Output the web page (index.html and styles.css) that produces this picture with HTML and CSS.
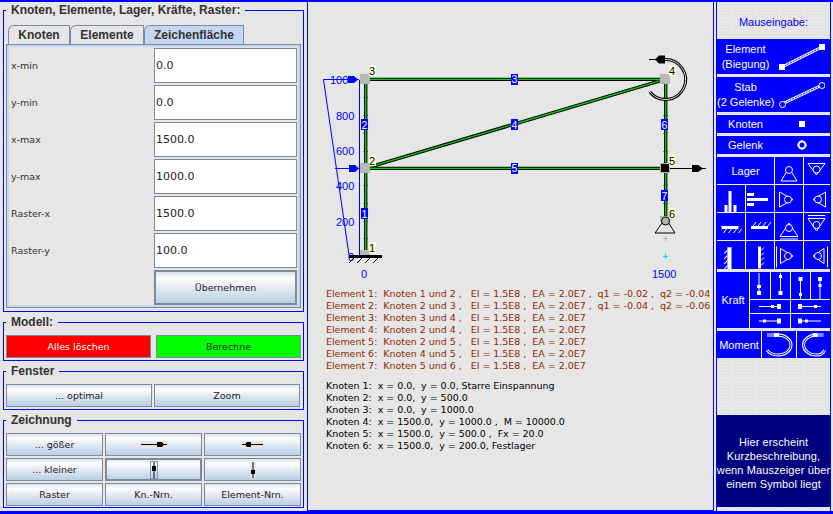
FILE: index.html
```html
<!DOCTYPE html>
<html lang="de">
<head>
<meta charset="utf-8">
<title>Stabwerk</title>
<link rel="stylesheet" href="styles.css">
</head>
<body>
<div class="app">
  <div class="left">
    <fieldset class="group g-data">
      <legend>Knoten, Elemente, Lager, Kräfte, Raster:</legend>
      <div class="tabs">
        <span class="tab t1">Knoten</span><span class="tab t2">Elemente</span><span class="tab t3 active">Zeichenfläche</span>
      </div>
      <div class="tabpane">
        <div class="frow"><label>x-min</label><input class="field" value="0.0"></div>
        <div class="frow"><label>y-min</label><input class="field" value="0.0"></div>
        <div class="frow"><label>x-max</label><input class="field" value="1500.0"></div>
        <div class="frow"><label>y-max</label><input class="field" value="1000.0"></div>
        <div class="frow"><label>Raster-x</label><input class="field" value="1500.0"></div>
        <div class="frow"><label>Raster-y</label><input class="field" value="100.0"></div>
        <div class="frow"><label></label><button class="btn apply">Übernehmen</button></div>
      </div>
    </fieldset>
    <fieldset class="group g-modell">
      <legend>Modell:</legend>
      <div class="two wide-gap">
        <button class="btn red">Alles löschen</button>
        <button class="btn green">Berechne</button>
      </div>
    </fieldset>
    <fieldset class="group g-fenster">
      <legend>Fenster</legend>
      <div class="two">
        <button class="btn">... optimal</button>
        <button class="btn">Zoom</button>
      </div>
    </fieldset>
    <fieldset class="group g-zeich">
      <legend>Zeichnung</legend>
      <div class="three">
        <button class="btn">... gößer</button>
        <button class="btn"><svg class="mini" viewBox="0 0 26 7"><rect width="26" height="7" fill="#e6e6e6"/><path d="M0 3.500H26" stroke="#000"/><path d="M16 1h5l2 2.500-2 2.500h-5z"/></svg></button>
        <button class="btn"><svg class="mini-s" viewBox="0 0 21 7"><rect width="21" height="7" fill="#e6e6e6"/><path d="M0 3.500H21" stroke="#000"/><path d="M9 1H5L3 3.500 5 6h4z"/></svg></button>
        <button class="btn">... kleiner</button>
        <button class="btn focus"><svg class="mini-v boxed" viewBox="0 0 6 16"><path d="M3 0V16" stroke="#000"/><path d="M1 4h4v5H1z"/></svg></button>
        <button class="btn"><svg class="mini-v" viewBox="0 0 6 16"><rect width="6" height="16" fill="#e6e6e6"/><path d="M3 0V16" stroke="#000"/><path d="M1 8h4v4H1z"/></svg></button>
        <button class="btn">Raster</button>
        <button class="btn">Kn.-Nrn.</button>
        <button class="btn">Element-Nrn.</button>
      </div>
    </fieldset>
  </div>

  <div class="center">
    <svg class="canvas" viewBox="308 2 405 285">
      <g fill="none" stroke="#0000ff">
        <path d="M359.500 80V255"/>
        <path d="M359 79.500H323.500L349 255"/>
        <path d="M335 168.500H359"/>
      </g>
      <path d="M348 76h6l4 3.500-4 3.500h-6z" fill="#0000ff"/>
      <path d="M349 165h6l4 3.500-4 3.500h-6z" fill="#0000ff"/>
      <g class="axis">
        <text x="330" y="84">100</text>
        <text x="336" y="120">800</text>
        <text x="336" y="155">600</text>
        <text x="336" y="190">400</text>
        <text x="336" y="226">200</text>
        <text x="348" y="261">0</text>
        <text x="361" y="278">0</text>
        <text x="652" y="278">1500</text>
      </g>
      <path class="ticks" d="M363 97.500h5M363 115.500h5M363 133.500h5M363 151.500h5M363 185.500h5M363 203.500h5M363 221.500h5M363 238.500h5M663 185.500h5M663 203.500h5M663 97.500h5M663 115.500h5M663 133.500h5M663 151.500h5"/>
      <g class="beam-o">
        <path d="M365.700 255V79"/><path d="M365 79.400H665"/><path d="M365 168.400H665"/><path d="M365 168.400L665 79.400"/><path d="M665.700 79V221"/>
      </g>
      <g class="beam-i">
        <path d="M365.700 255V79"/><path d="M365 79.400H665"/><path d="M365 168.400H665"/><path d="M365 168.400L665 79.400"/><path d="M665.700 79V221"/>
      </g>
      <rect class="node" x="360" y="74" width="10" height="10"/>
      <rect class="node" x="360" y="163" width="10" height="10"/>
      <rect class="node" x="360" y="250" width="10" height="6"/>
      <rect class="node" x="660" y="74" width="10" height="10"/>
      <rect x="660.500" y="163.500" width="9" height="9" fill="#000" stroke="#b4b4b4"/>
      <rect class="node" x="660" y="216" width="10" height="6"/>
      <rect x="349" y="255" width="33" height="3"/>
      <path d="M349 263l5-5M357 263l5-5M365 263l5-5M373 263l5-5" stroke="#000" fill="none"/>
      <path d="M665.500 218L675 233H655Z" fill="none" stroke="#000"/>
      <circle cx="665.500" cy="221" r="4" fill="#b4b4b4" stroke="#000"/>
      <path d="M663 238.500h5M665.500 236v5" stroke="#b4b4b4"/>
      <path d="M663 256.500h5M665.500 254v5" stroke="#00e0e0"/>
      <path class="arc-o" d="M650 92A20 20 0 1 0 665 59.500"/>
      <path class="arc-i" d="M650 92A20 20 0 1 0 665 59.500"/>
      <path d="M649 59.500H665" stroke="#000"/>
      <path d="M665 55.500h-6l-4 4 4 4h6z"/>
      <path d="M670 168.500H706" stroke="#000"/>
      <path d="M692 165h6l5 3.500-5 3.500h-6z"/>
      <g class="nbg">
        <rect x="369" y="65" width="7" height="11"/><rect x="369" y="155" width="7" height="11"/><rect x="369" y="242" width="7" height="11"/>
        <rect x="669" y="65" width="7" height="11"/><rect x="669" y="155" width="7" height="11"/><rect x="669" y="208" width="7" height="11"/>
      </g>
      <g class="ntext">
        <text x="369" y="75">3</text><text x="369" y="165">2</text><text x="369" y="252">1</text>
        <text x="669" y="75">4</text><text x="669" y="165">5</text><text x="669" y="218">6</text>
      </g>
      <g fill="#0000ff">
        <rect x="361" y="208" width="7" height="11"/><rect x="361" y="119" width="7" height="11"/>
        <rect x="511" y="74" width="7" height="11"/><rect x="511" y="119" width="7" height="11"/><rect x="511" y="163" width="7" height="11"/>
        <rect x="661" y="119" width="7" height="11"/><rect x="661" y="190" width="7" height="11"/>
      </g>
      <g class="etext">
        <text x="364.500" y="217.500">1</text><text x="364.500" y="128.500">2</text>
        <text x="514.500" y="83">3</text><text x="514.500" y="128.500">4</text><text x="514.500" y="172">5</text>
        <text x="664.500" y="128.500">6</text><text x="664.500" y="199.500">7</text>
      </g>
    </svg>
    <div class="lines elements">
      <div>Element 1:  Knoten 1 und 2 ,   EI = 1.5E8 ,  EA = 2.0E7 ,  q1 = -0.02 ,  q2 = -0.04</div>
      <div>Element 2:  Knoten 2 und 3 ,   EI = 1.5E8 ,  EA = 2.0E7 ,  q1 = -0.04 ,  q2 = -0.06</div>
      <div>Element 3:  Knoten 3 und 4 ,   EI = 1.5E8 ,  EA = 2.0E7</div>
      <div>Element 4:  Knoten 2 und 4 ,   EI = 1.5E8 ,  EA = 2.0E7</div>
      <div>Element 5:  Knoten 2 und 5 ,   EI = 1.5E8 ,  EA = 2.0E7</div>
      <div>Element 6:  Knoten 4 und 5 ,   EI = 1.5E8 ,  EA = 2.0E7</div>
      <div>Element 7:  Knoten 5 und 6 ,   EI = 1.5E8 ,  EA = 2.0E7</div>
    </div>
    <div class="lines knots">
      <div>Knoten 1:  x = 0.0,  y = 0.0, Starre Einspannung</div>
      <div>Knoten 2:  x = 0.0,  y = 500.0</div>
      <div>Knoten 3:  x = 0.0,  y = 1000.0</div>
      <div>Knoten 4:  x = 1500.0,  y = 1000.0 ,  M = 10000.0</div>
      <div>Knoten 5:  x = 1500.0,  y = 500.0 ,  Fx = 20.0</div>
      <div>Knoten 6:  x = 1500.0,  y = 200.0, Festlager</div>
    </div>
  </div>

  <div class="right">
    <div class="mhead">Mauseingabe:</div>
    <div class="mrow h35">
      <span class="mlabel">Element<br>(Biegung)</span>
      <svg class="line-ico" viewBox="0 0 46 26"><path d="M3 23L43 3" stroke="#fff" stroke-width="3"/><path d="M3 23L43 3" stroke="#00f" stroke-dasharray="2 1"/><rect y="20" width="6" height="6" fill="#fff"/><rect x="40" width="6" height="6" fill="#fff"/></svg>
    </div>
    <div class="mrow h35">
      <span class="mlabel">Stab<br>(2 Gelenke)</span>
      <svg class="line-ico" viewBox="0 0 46 26"><path d="M5 21L41 4" stroke="#fff" stroke-width="3"/><path d="M5 21L41 4" stroke="#00f" stroke-dasharray="2 1"/><circle cx="3.500" cy="22.500" r="3" fill="#00f" stroke="#fff"/><circle cx="43" cy="3.500" r="3" fill="#00f" stroke="#fff"/></svg>
    </div>
    <div class="mrow h18"><span class="mlabel">Knoten</span><svg class="small-ico" viewBox="0 0 6 6"><rect width="6" height="6" fill="#fff"/></svg></div>
    <div class="mrow h18"><span class="mlabel">Gelenk</span><svg class="gel-ico" viewBox="0 0 10 10"><circle cx="5" cy="5" r="3.500" fill="none" stroke="#fff" stroke-width="2"/><path d="M5 0v2M5 8v2M0 5h2M8 5h2" stroke="#fff"/></svg></div>

    <div class="lager">
      <div class="cell lab span2">Lager</div>
      <div class="cell"><svg class="i" viewBox="0 0 28 27"><path d="M14 11L22 24H6Z" class="w"/><circle cx="14" cy="13" r="3.500" class="wb"/></svg></div>
      <div class="cell"><svg class="i" viewBox="0 0 26 27"><path d="M4 6.500H21L12.500 18Z" class="w"/><circle cx="12.500" cy="12.500" r="3.500" class="wb"/></svg></div>

      <div class="cell first"><svg class="i" viewBox="0 0 27 27"><path d="M7 20h3v7H7zM11 6h3v21h-3zM16 20h3v7h-3z" fill="#fff"/></svg></div>
      <div class="cell"><svg class="i" viewBox="0 0 28 27"><path d="M1 8h7v3H1zM1 13h21v3H1zM1 18h7v3H1z" fill="#fff"/></svg></div>
      <div class="cell"><svg class="i" viewBox="0 0 28 27"><path d="M4.500 7L18 14.500 4.500 22Z" class="w"/><circle cx="13" cy="14.500" r="3.500" class="wb"/></svg></div>
      <div class="cell"><svg class="i" viewBox="0 0 26 27"><path d="M21.500 7L9 14.500 21.500 22Z" class="w"/><circle cx="14" cy="14.500" r="3.500" class="wb"/></svg></div>

      <div class="cell first"><svg class="i" viewBox="0 0 27 27"><rect x="4" y="13" width="17" height="3" fill="#fff"/><path d="M6 20l3-4M11 20l3-4M16 20l3-4M21 20l3-4" class="w"/></svg></div>
      <div class="cell"><svg class="i" viewBox="0 0 28 27"><rect x="5" y="13" width="17" height="3" fill="#fff"/><path d="M7 13l3-4M12 13l3-4M17 13l3-4M22 13l3-4" class="w"/></svg></div>
      <div class="cell"><svg class="i" viewBox="0 0 28 27"><path d="M14 10L23 23.500H5Z" class="w"/><circle cx="14" cy="15" r="3.500" class="wb"/><path d="M5 26H23" class="w"/></svg></div>
      <div class="cell"><svg class="i" viewBox="0 0 26 27"><path d="M4 5.500H21L12.500 18Z" class="w"/><circle cx="12.500" cy="12" r="3.500" class="wb"/><path d="M4 2.500H21" class="w"/></svg></div>

      <div class="cell first last"><svg class="i" viewBox="0 0 27 27"><rect x="10" y="6" width="4" height="21" fill="#fff"/><path d="M10 9l-3 3M10 14l-3 3M10 19l-3 3M10 24l-3 3" class="w"/></svg></div>
      <div class="cell last"><svg class="i" viewBox="0 0 28 27"><rect x="12" y="5" width="3" height="22" fill="#fff"/><path d="M15 9l3-3M15 14l3-3M15 19l3-3M15 24l3-3" class="w"/></svg></div>
      <div class="cell last"><svg class="i" viewBox="0 0 28 27"><path d="M5.500 7L18 14.500 5.500 22Z" class="w"/><circle cx="13" cy="14.500" r="3.500" class="wb"/><path d="M1.500 5V26" class="w"/></svg></div>
      <div class="cell last"><svg class="i" viewBox="0 0 26 27"><path d="M20 7L9 14.500 20 22Z" class="w"/><circle cx="14" cy="14.500" r="3.500" class="wb"/><path d="M23.500 5V26" class="w"/></svg></div>
    </div>

    <div class="kraft">
      <div class="klabel">Kraft</div>
      <div class="kicons">
        <div class="kfour">
          <div class="cell"><svg class="i" viewBox="0 0 20 27"><path d="M9 1V23" class="w"/><rect x="7" y="13" width="4" height="3" fill="#fff"/><rect x="7" y="19" width="4" height="4" fill="#fff"/></svg></div>
          <div class="cell"><svg class="i" viewBox="0 0 19 27"><path d="M9.500 1V23" class="w"/><rect x="8" y="3" width="3" height="3" fill="#fff"/><rect x="7.500" y="19" width="4" height="4" fill="#fff"/></svg></div>
          <div class="cell"><svg class="i" viewBox="0 0 19 27"><path d="M9.500 5V27" class="w"/><rect x="7.500" y="5" width="4" height="4" fill="#fff"/><rect x="8" y="21" width="3" height="3" fill="#fff"/></svg></div>
          <div class="cell"><svg class="i" viewBox="0 0 19 27"><path d="M9 5V27" class="w"/><rect x="7" y="5" width="4" height="4" fill="#fff"/><rect x="7.500" y="12" width="3" height="3" fill="#fff"/></svg></div>
        </div>
        <div class="ktwo">
          <div class="cell"><svg class="h" viewBox="0 0 40 13"><path d="M9 6.500H31" class="w"/><rect x="21" y="5" width="3" height="3" fill="#fff"/><rect x="27" y="4" width="4" height="5" fill="#fff"/></svg></div>
          <div class="cell"><svg class="h" viewBox="0 0 39 13"><path d="M7 6.500H30" class="w"/><rect x="7" y="4" width="4" height="5" fill="#fff"/><rect x="23" y="5" width="3" height="3" fill="#fff"/></svg></div>
          <div class="cell"><svg class="h" viewBox="0 0 40 13"><path d="M9 6.500H31" class="w"/><rect x="13" y="5" width="3" height="3" fill="#fff"/><rect x="27" y="4" width="4" height="5" fill="#fff"/></svg></div>
          <div class="cell"><svg class="h" viewBox="0 0 39 13"><path d="M7 6.500H30" class="w"/><rect x="7" y="4" width="4" height="5" fill="#fff"/><rect x="14" y="5" width="3" height="3" fill="#fff"/></svg></div>
        </div>
      </div>
    </div>

    <div class="moment">
      <div class="klabel">Moment</div>
      <div class="cell"><svg class="i" viewBox="0 0 34 27"><path d="M5 4H16A13 10 0 0 1 16 24C11 24 7 22 5 19" class="ma"/><path d="M5 4H16A13 10 0 0 1 16 24C11 24 7 22 5 19" class="mb"/><rect x="12" y="2" width="5" height="4" fill="#fff"/></svg></div>
      <div class="cell"><svg class="i" viewBox="0 0 32 27"><path d="M26 4H19A13 10 0 0 0 19 24C24 24 26 22 27 19" class="ma"/><path d="M26 4H19A13 10 0 0 0 19 24C24 24 26 22 27 19" class="mb"/><rect x="15" y="2" width="5" height="4" fill="#fff"/></svg></div>
    </div>

    <div class="spacer"></div>
    <div class="hint">Hier erscheint<br>Kurzbeschreibung,<br>wenn Mauszeiger über<br>einem Symbol liegt</div>
  </div>
</div>
</body>
</html>
```

FILE: styles.css
```css
* { box-sizing: border-box; }
html, body { margin: 0; padding: 0; background: #e6e6e6; }
body { width: 833px; height: 514px; overflow: hidden; }
body, button, input { font-family: "DejaVu Sans", sans-serif; font-size: 9.5px; color: #222; }

.app {
  width: 833px; height: 514px;
  display: flex; gap: 3px;
  padding: 0 2px 0 3px;
  border-top: 2px solid #0000ff;
  border-bottom: 3px solid #0000ff;
}
.left { width: 301px; padding-top: 1px; display: flex; flex-direction: column; gap: 3px; flex: none; }

.group { margin: 0; padding: 0 2px 1px; border: 1px solid #0000ff; min-width: 0; }
.group legend {
  margin-left: 0; padding: 0 5px;
  font: bold 12px/14px "Liberation Sans", sans-serif;
  color: #333;
}
.g-data { height: 309px; padding-top: 8px; }
.g-modell { padding-top: 6px; padding-bottom: 2px; }
.g-fenster { padding-top: 6px; padding-bottom: 2px; }
.g-zeich { padding-top: 6px; }

.tabs { display: flex; padding-left: 2px; height: 19px; }
.tab {
  display: flex; align-items: center; justify-content: center;
  font: bold 12px "Liberation Sans", sans-serif; color: #333;
  border: 1px solid #7a8aa8; border-bottom: 0;
  border-radius: 6px 0 0 0; background: #e6e6e6;
}
.t1 { width: 62px; }
.t2 { width: 74px; }
.t3 { width: 100px; }
.tab.active { background: #c5d7f0; }

.tabpane {
  height: 264px;
  border: 1px solid #7a8aa8;
  box-shadow: inset 0 0 0 2px #c5d7f0;
  padding: 3px 3px 2px 4px;
  display: flex; flex-direction: column; gap: 2px;
}
.frow { display: flex; height: 35px; align-items: center; }
.frow label { width: 143px; font-size: 9.5px; color: #333; }
.field {
  width: 143px; height: 35px; padding: 0 1px;
  border: 1px solid #7a8a99; background: #fff;
  font-size: 11px; color: #222; outline: 0; border-radius: 0;
}
.btn {
  height: 23px; padding: 0; margin: 0; cursor: default;
  border: 1px solid #7c8a9c; border-radius: 0;
  background: linear-gradient(#d6e2ef 0, #fff 20%, #e3eaf2 50%, #b9cfe5 100%);
  display: flex; align-items: center; justify-content: center;
  font-size: 9.5px; color: #222;
}
.apply { width: 143px; height: 35px; border: 2px solid #7c8a9c; }
.red { background: #ff0000; color: #fff; }
.green { background: #00ff00; color: #222; }
.two { display: grid; grid-template-columns: 146px 146px; gap: 2px; }
.wide-gap { grid-template-columns: 145px 145px; gap: 5px; }
.three { display: grid; grid-template-columns: repeat(3, 97px); gap: 2px; }
.focus { box-shadow: inset 0 0 0 1px #7c8a9c; }
.mini { width: 26px; height: 7px; }
.mini-s { width: 21px; height: 7px; }
.mini-v { width: 6px; height: 16px; }
.boxed { outline: 1px solid #7c9ab4; }

.center {
  width: 407px; flex: none;
  border: 1px solid #0000ff; border-top: 0;
  margin-right: -1px;
}
.canvas { display: block; width: 405px; height: 285px; }
.axis text { font: 11px "Liberation Sans", sans-serif; fill: #0000ff; }
.ticks { stroke: #00b8b8; fill: none; }
.beam-o path { stroke: #000; stroke-width: 3.400; fill: none; }
.beam-i path { stroke: #00d000; stroke-width: 1.400; fill: none; }
.node { fill: #b8b8b8; }
.nbg rect { fill: #ffffd8; }
.ntext text { font: 11px "Liberation Sans", sans-serif; fill: #000; }
.etext text { font: 10.500px "Liberation Sans", sans-serif; fill: #fff; text-anchor: middle; }
.arc-o { fill: none; stroke: #000; stroke-width: 3; }
.arc-i { fill: none; stroke: #e6e6e6; stroke-width: 1; }

.lines { padding-left: 18px; font-size: 9.5px; line-height: 12px; }
.lines div { white-space: pre; letter-spacing: -.03px; }
.elements { color: #8f2a00; margin-top: 1px; }
.knots { color: #000; margin-top: 8px; }

.right {
  width: 115px; flex: none;
  border: 1px solid #0000ff; border-top: 0; border-bottom: 0;
  padding-top: 2px;
  display: flex; flex-direction: column;
  background-color: #e4e4e4;
  background-image: radial-gradient(#f4f4f4 .6px, transparent .8px);
  background-size: 3px 3px;
  color: #fff;
  font-family: "Liberation Sans", sans-serif;
}
.mhead {
  height: 35px; display: flex; align-items: center; justify-content: center;
  color: #0000ff; font-size: 11px;
}
.mrow {
  background: #0000ff; display: flex; align-items: center;
  margin-bottom: 3px; font-size: 11px; color: #fff;
}
.h35 { height: 35px; }
.h18 { height: 18px; }
.mlabel { width: 57px; flex: none; text-align: center; line-height: 15px; white-space: nowrap; font-size: 11px; }
.line-ico { width: 46px; height: 26px; margin-left: 5px; }
.small-ico { width: 6px; height: 6px; margin-left: 25px; }
.gel-ico { width: 10px; height: 10px; margin-left: 23px; }

.lager {
  display: grid;
  grid-template-columns: 28px 29px 29px 27px;
  grid-template-rows: repeat(4, 28px);
  background: #0000ff; height: 112px; margin-bottom: 3px;
}
.cell {
  display: flex; align-items: center; justify-content: center;
  background: #0000ff;
  border-left: 1px solid #ffffc8; border-bottom: 1px solid #ffffc8;
  min-width: 0; overflow: hidden;
}
.cell.first, .cell.lab { border-left: 0; }
.cell.last { border-bottom: 0; }
.lab { font-size: 11px; color: #fff; }
.span2 { grid-column: span 2; }
.i { width: 100%; height: 100%; display: block; }
.h { width: 100%; height: 100%; display: block; }
.w { fill: none; stroke: #fff; }
.wb { fill: #00f; stroke: #fff; }
.ma { fill: none; stroke: #fff; stroke-width: 3; }
.mb { fill: none; stroke: #00f; }

.kraft { display: flex; height: 56px; background: #0000ff; margin-bottom: 3px; }
.klabel { display: flex; align-items: center; justify-content: center; font-size: 11px; color: #fff; }
.kraft .klabel { width: 32px; }
.kicons { flex: 1; display: flex; flex-direction: column; }
.kfour { display: grid; grid-template-columns: 21px 20px 20px 20px; height: 28px; }
.ktwo { display: grid; grid-template-columns: 41px 40px; grid-auto-rows: 14px; }
.ktwo .cell:nth-child(n+3) { border-bottom: 0; }

.moment { display: grid; grid-template-columns: 44px 35px 34px; height: 27px; background: #0000ff; }
.moment .cell { border-bottom: 0; }

.spacer { height: 57px; }
.hint {
  height: 92px; background: #00007f; color: #fff;
  text-align: center; font-size: 11px; line-height: 14px; letter-spacing: .1px;
  display: flex; align-items: center; justify-content: center; padding-top: 4px; white-space: nowrap;
}
```
